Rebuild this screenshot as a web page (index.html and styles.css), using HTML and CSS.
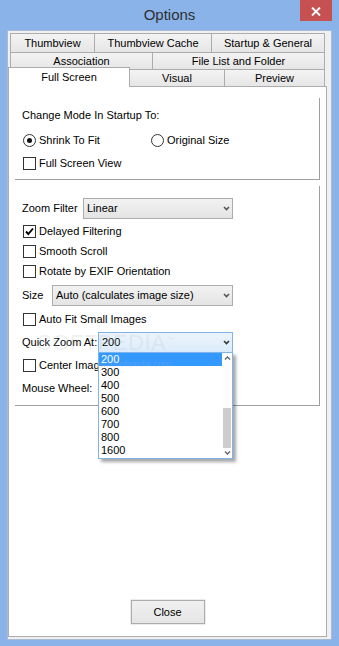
FILE: index.html
```html
<!DOCTYPE html>
<html>
<head>
<meta charset="utf-8">
<title>Options</title>
<link rel="stylesheet" href="styles.css">
</head>
<body>
<div class="window">
  <div class="titlebar">
    <span></span>
    <div class="title">Options</div>
    <div class="close-x">
      <svg width="10" height="9" viewBox="0 0 10 9"><path d="M1 0.5L9 8.5M9 0.5L1 8.5" stroke="#fff" stroke-width="1.9"/></svg>
    </div>
  </div>
  <div class="client">
    <div class="tabs">
      <div class="tab-row row1">
        <div class="tab w85">Thumbview</div>
        <div class="tab w118">Thumbview Cache</div>
        <div class="tab w114">Startup &amp; General</div>
      </div>
      <div class="tab-row row2">
        <div class="tab w143">Association</div>
        <div class="tab w173">File List and Folder</div>
      </div>
      <div class="tab-row row3">
        <div class="tab active w122">Full Screen</div>
        <div class="tab w96">Visual</div>
        <div class="tab w101">Preview</div>
      </div>
    </div>
    <div class="panel">
      <div class="group g1">
        <div class="label-line">Change Mode In Startup To:</div>
        <div class="radio-line">
          <div class="opt opt-first"><span class="radio checked"></span><span>Shrink To Fit</span></div>
          <div class="opt"><span class="radio"></span><span>Original Size</span></div>
        </div>
        <div class="check-row mt10"><span class="box"></span><span>Full Screen View</span></div>
      </div>

      <div class="group g2">
        <div class="field-row">
          <span class="lbl l61">Zoom Filter</span>
          <div class="select s150"><span>Linear</span><svg class="arrow" width="7" height="5" viewBox="0 0 7 5"><path d="M1 1L3.5 3.5L6 1" fill="none" stroke="#555" stroke-width="1.6"/></svg></div>
        </div>
        <div class="check-row mt6"><span class="box"><svg width="11" height="11" viewBox="0 0 11 11"><path d="M2 5.5L4.3 8L9 2.5" fill="none" stroke="#000" stroke-width="1.9"/></svg></span><span>Delayed Filtering</span></div>
        <div class="check-row mt7"><span class="box"></span><span>Smooth Scroll</span></div>
        <div class="check-row mt7"><span class="box"></span><span>Rotate by EXIF Orientation</span></div>
        <div class="field-row mt7">
          <span class="lbl l30">Size</span>
          <div class="select s181"><span>Auto (calculates image size)</span><svg class="arrow" width="7" height="5" viewBox="0 0 7 5"><path d="M1 1L3.5 3.5L6 1" fill="none" stroke="#555" stroke-width="1.6"/></svg></div>
        </div>
        <div class="check-row mt7"><span class="box"></span><span>Auto Fit Small Images</span></div>
        <div class="field-row mt6">
          <span class="lbl l76">Quick Zoom At:</span>
          <div class="select s135 focused"><span>200</span><svg class="arrow" width="7" height="5" viewBox="0 0 7 5"><path d="M1 1L3.5 3.5L6 1" fill="none" stroke="#333" stroke-width="1.6"/></svg>
            <div class="dropdown">
              <div class="items">
                <div class="item sel">200</div>
                <div class="item">300</div>
                <div class="item">400</div>
                <div class="item">500</div>
                <div class="item">600</div>
                <div class="item">700</div>
                <div class="item">800</div>
                <div class="item">1600</div>
              </div>
              <div class="scrollbar">
                <div class="sb-arrow"><svg width="7" height="4" viewBox="0 0 7 4"><path d="M1 3.5L3.5 1L6 3.5" fill="none" stroke="#666" stroke-width="1.4"/></svg></div>
                <div class="thumb"></div>
                <div class="sb-arrow bottom"><svg width="7" height="4" viewBox="0 0 7 4"><path d="M1 0.5L3.5 3L6 0.5" fill="none" stroke="#666" stroke-width="1.4"/></svg></div>
              </div>
            </div>
          </div>
        </div>
        <div class="check-row mt6"><span class="box"></span><span>Center Image</span></div>
        <div class="field-row mt6">
          <span class="lbl l76">Mouse Wheel:</span>
          <div class="select s135"></div>
        </div>
        <div class="watermark">SOFTPEDIA<sup>™</sup></div>
        <div class="watermark-url">www.softpedia.com</div>
      </div>

      <button class="btn-close">Close</button>
    </div>
  </div>
</div>
</body>
</html>
```

FILE: styles.css
```css
* { box-sizing: border-box; }

body {
  margin: 0;
  width: 339px;
  height: 646px;
  overflow: hidden;
  background: #8ab3ea;
  font-family: "Liberation Sans", Arial, sans-serif;
  font-size: 11px;
  line-height: 13px;
  color: #000;
}

.window {
  display: flex;
  flex-direction: column;
  height: 646px;
}

.titlebar {
  height: 30px;
  flex: none;
  display: grid;
  grid-template-columns: 1fr auto 1fr;
}

.title {
  font-size: 15px;
  line-height: 30px;
  color: #2f2f2f;
}

.close-x {
  justify-self: end;
  align-self: start;
  margin-right: 7px;
  width: 32px;
  height: 21px;
  background: #c75050;
  display: flex;
  align-items: center;
  justify-content: center;
  padding-top: 1px;
}

.client {
  flex: 1;
  margin: 0 7px 6px 7px;
  border: 1px solid #a8bcd8;
  background: #f0f0f0;
  display: flex;
  flex-direction: column;
}

.tabs {
  padding-top: 2px;
  flex: none;
}

.tab-row {
  display: flex;
  padding-left: 2px;
}

.row1 { height: 19px; }
.row2 { height: 17px; }
.row3 { height: 17px; padding-left: 0; align-items: flex-end; }

.tab {
  height: 100%;
  border: 1px solid #acacac;
  border-bottom: none;
  background: linear-gradient(#f3f3f3, #e6e6e6);
  display: flex;
  align-items: center;
  justify-content: center;
  white-space: nowrap;
}

.tab + .tab { margin-left: -1px; }

.tab.active {
  height: 20px;
  margin-bottom: -1px;
  background: #fff;
  position: relative;
  z-index: 2;
}

.w85 { width: 85px; }
.w118 { width: 118px; }
.w114 { width: 114px; }
.w143 { width: 143px; }
.w173 { width: 173px; }
.w122 { width: 122px; }
.w96 { width: 96px; }
.w101 { width: 101px; }

.panel {
  flex: 1;
  margin: 0 4px 2px 0;
  border: 1px solid #adadad;
  background: #fff;
  display: flex;
  flex-direction: column;
}

.group {
  margin-left: 6px;
  width: 305px;
  border-right: 1px solid #a0a0a0;
  border-bottom: 1px solid #a0a0a0;
  padding-left: 7px;
  display: flex;
  flex-direction: column;
  flex: none;
}

.g1 {
  margin-top: 11px;
  height: 82px;
  padding-top: 11px;
}

.g2 {
  margin-top: 6px;
  height: 220px;
  padding-top: 12px;
  position: relative;
}

.label-line { height: 13px; }

.radio-line {
  display: flex;
  margin-top: 12px;
  margin-left: 1px;
  height: 13px;
}

.opt {
  display: flex;
  align-items: center;
  gap: 3px;
}

.opt-first { width: 128px; }

.radio {
  width: 13px;
  height: 13px;
  border: 1px solid #333;
  border-radius: 50%;
  background: #fff;
  display: flex;
  align-items: center;
  justify-content: center;
}

.radio.checked::after {
  content: "";
  width: 5px;
  height: 5px;
  border-radius: 50%;
  background: #111;
}

.check-row {
  display: flex;
  align-items: center;
  gap: 3px;
  height: 13px;
  margin-left: 1px;
}

.box {
  width: 13px;
  height: 13px;
  border: 1px solid #333;
  background: #fff;
  display: flex;
}

.mt6 { margin-top: 6px; }
.mt7 { margin-top: 7px; }
.mt10 { margin-top: 10px; }

.field-row {
  display: flex;
  align-items: center;
  height: 21px;
}

.lbl { flex: none; }
.l61 { width: 61px; }
.l30 { width: 30px; }
.l76 { width: 76px; }

.select {
  height: 21px;
  border: 1px solid #acacac;
  background: linear-gradient(#f2f2f2, #e4e4e4);
  display: flex;
  align-items: center;
  padding-left: 3px;
  position: relative;
  white-space: nowrap;
}

.select.focused {
  border-color: #7eb4ea;
  background: linear-gradient(#ecf4fc, #dcecfc);
  z-index: 3;
}

.s150 { width: 150px; }
.s181 { width: 181px; }
.s135 { width: 135px; }

.arrow {
  margin-left: auto;
  margin-right: 2px;
}

.dropdown {
  position: absolute;
  left: -1px;
  top: 19px;
  width: 135px;
  height: 107px;
  border: 1px solid #7eb4ea;
  background: #fff;
  box-shadow: 3px 3px 3px rgba(0, 0, 0, 0.35);
  display: flex;
  z-index: 5;
}

.items {
  flex: 1;
  display: flex;
  flex-direction: column;
}

.item {
  height: 13px;
  line-height: 13px;
  padding-left: 2px;
}

.item.sel {
  background: #3399ff;
  color: #fff;
}

.scrollbar {
  width: 10px;
  display: flex;
  flex-direction: column;
  align-items: center;
  background: #fdfdfd;
}

.sb-arrow {
  height: 10px;
  width: 10px;
  display: flex;
  align-items: center;
  justify-content: center;
}

.sb-arrow.bottom { margin-top: auto; }

.thumb {
  margin-top: 45px;
  width: 8px;
  height: 40px;
  background: #cdcdcd;
}

.watermark {
  position: absolute;
  left: 22px;
  top: 142px;
  font-size: 22px;
  line-height: 24px;
  letter-spacing: 0.5px;
  color: rgba(190, 190, 190, 0.22);
  pointer-events: none;
  z-index: 4;
}

.watermark sup { font-size: 8px; }

.watermark-url {
  position: absolute;
  left: 78px;
  top: 172px;
  font-size: 9px;
  color: rgba(190, 190, 190, 0.25);
  z-index: 4;
}

.btn-close {
  margin: auto auto 12px auto;
  width: 74px;
  height: 24px;
  border: 1px solid #acacac;
  background: linear-gradient(#f0f0f0, #e5e5e5);
  box-shadow: 0 0 0 1px #ececec;
  font-family: inherit;
  font-size: 11px;
  color: #000;
  padding: 0;
  flex: none;
}
```
